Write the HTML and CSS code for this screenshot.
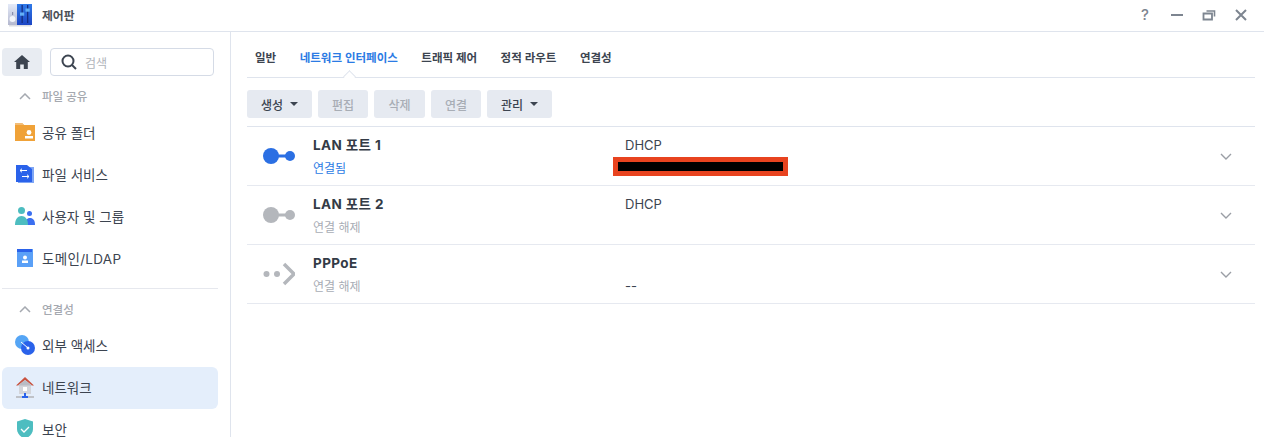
FILE: index.html
```html
<!DOCTYPE html>
<html lang="ko">
<head>
<meta charset="utf-8">
<title>제어판</title>
<link rel="stylesheet" href="styles.css">
</head>
<body>
<div class="app">
  <header class="titlebar">
    <svg class="app-icon" width="24" height="24" viewBox="0 0 24 24">
      <defs>
        <linearGradient id="cpL" x1="0" y1="0" x2="0" y2="1"><stop offset="0" stop-color="#e4eaf8"/><stop offset="1" stop-color="#b4b8cf"/></linearGradient>
        <linearGradient id="cpR" x1="0" y1="0" x2="0" y2="1"><stop offset="0" stop-color="#2f7ae8"/><stop offset="1" stop-color="#1c45c4"/></linearGradient>
      </defs>
      <rect x="0" y="1" width="9" height="21" fill="url(#cpL)"/>
      <rect x="9" y="1" width="15" height="21" fill="url(#cpR)"/>
      <circle cx="4.500" cy="16" r="3" fill="#f2f4fa"/>
      <rect x="4" y="9" width="1.200" height="3" fill="#8b90ad"/>
      <rect x="13.500" y="2" width="1.300" height="18" fill="#142c80"/>
      <rect x="19" y="2" width="1.300" height="18" fill="#142c80"/>
      <rect x="12" y="9.500" width="4.200" height="3.200" fill="#63b0f5"/>
      <rect x="17.500" y="5.500" width="4.200" height="3.200" fill="#63b0f5"/>
      <rect x="1" y="22" width="22" height="1.500" fill="#dcdde2"/>
    </svg>
    <span class="app-title">제어판</span>
    <div class="win-controls">
      <span class="help">?</span>
      <svg width="14" height="14" viewBox="0 0 14 14"><path d="M1 7h12" stroke="#7d8590" stroke-width="2"/></svg>
      <svg width="14" height="14" viewBox="0 0 14 14" fill="none" stroke="#7d8590"><path d="M1.500 5.500h8.500v6h-8.500z" stroke-width="1.800"/><path d="M4.500 3h8v5.500" stroke-width="1.600"/></svg>
      <svg width="14" height="14" viewBox="0 0 14 14"><path d="M2 2l10 10M12 2L2 12" stroke="#7d8590" stroke-width="2"/></svg>
    </div>
  </header>
  <div class="body">
    <aside class="sidebar">
      <div class="search-row">
        <button class="home-btn">
          <svg width="16" height="14" viewBox="0 0 16 14"><path d="M8 0L0 7h2.200v7h4v-4.500h3.600V14h4V7H16z" fill="#3c4450"/></svg>
        </button>
        <div class="search">
          <svg width="16" height="16" viewBox="0 0 16 16" fill="none" stroke="#3c4450" stroke-width="2"><circle cx="7" cy="7" r="5.500"/><path d="M11 11l4 4"/></svg>
          <span>검색</span>
        </div>
      </div>
      <div class="group-head first">
        <svg width="12" height="7" viewBox="0 0 12 7" fill="none" stroke="#a5a9b0" stroke-width="1.500"><path d="M1 6l5-5 5 5"/></svg>
        <span>파일 공유</span>
      </div>
      <div class="nav-item">
        <svg width="20" height="18" viewBox="0 0 20 18"><path d="M0 0h7l2 2h11v16H0z" fill="#f0a238"/><path d="M0 0h7l2 2H0z" fill="#f2bd78"/><circle cx="14" cy="9.500" r="2.400" fill="#fff"/><rect x="10" y="13" width="8" height="2.500" fill="#fff"/></svg>
        <span>공유 폴더</span>
      </div>
      <div class="nav-item">
        <svg width="20" height="20" viewBox="0 0 20 20"><rect x="3" y="3" width="16" height="16" fill="#7fa6f5"/><path d="M1 1h11l5 4v13H1z" fill="#2a62ea"/><path d="M5 6.500H12M5 6.500l2-1.800M5 6.500l2 1.800M14 12.500H7M14 12.500l-2-1.800M14 12.500l-2 1.800" stroke="#fff" fill="none" stroke-width="1"/></svg>
        <span>파일 서비스</span>
      </div>
      <div class="nav-item">
        <svg width="20" height="18" viewBox="0 0 20 18"><circle cx="14.500" cy="6.500" r="2.500" fill="#3b6ff0"/><path d="M10 18c0-5 2-7 5-7s5 2 5 7z" fill="#3b6ff0"/><circle cx="6.500" cy="3.500" r="3.500" fill="#4dbdc0"/><path d="M0 18c0-6 3-9 6.500-9s6.500 3 6.500 9z" fill="#4dbdc0"/></svg>
        <span>사용자 및 그룹</span>
      </div>
      <div class="nav-item spaced">
        <svg width="20" height="20" viewBox="0 0 20 20"><rect x="2" y="1" width="16" height="18" fill="#5aa0f7"/><rect x="2" y="1" width="15" height="3" fill="#2a62ea"/><circle cx="10" cy="9.500" r="2" fill="#fff"/><rect x="7" y="12.500" width="6" height="2.500" fill="#fff"/></svg>
        <span>도메인/LDAP</span>
      </div>
      <hr class="divider">
      <div class="group-head">
        <svg width="12" height="7" viewBox="0 0 12 7" fill="none" stroke="#a5a9b0" stroke-width="1.500"><path d="M1 6l5-5 5 5"/></svg>
        <span>연결성</span>
      </div>
      <div class="nav-item">
        <svg width="20" height="20" viewBox="0 0 20 20"><circle cx="7" cy="7" r="7" fill="#55a5f5"/><circle cx="13" cy="13" r="7" fill="#2a62ea"/><path d="M6 7l7 6" stroke="#fff" stroke-width="1"/><circle cx="13" cy="13" r="1.500" fill="#fff"/></svg>
        <span>외부 액세스</span>
      </div>
      <div class="nav-item active">
        <svg width="20" height="21" viewBox="0 0 20 21"><path d="M4 8h12v9H4z" fill="#d3d5da"/><path d="M10 0L1 8.500h2L10 3l7 5.500h2z" fill="#c9523f"/><path d="M3 8.500L10 3l7 5.500z" fill="#b9bcc4"/><rect x="8" y="10" width="4" height="4" fill="#fff"/><rect x="1" y="19" width="18" height="2" fill="#bfc2c8"/><rect x="9" y="16" width="2" height="3" fill="#2a62ea"/><rect x="7" y="19" width="6" height="2" fill="#2a62ea"/></svg>
        <span>네트워크</span>
      </div>
      <div class="nav-item">
        <svg width="20" height="20" viewBox="0 0 20 20"><path d="M10 0l8 2.500V10c0 5-4 8-8 10-4-2-8-5-8-10V2.500z" fill="#4dbdc0"/><path d="M6 10l3 3 5-5" stroke="#fff" stroke-width="1.300" fill="none"/></svg>
        <span>보안</span>
      </div>
    </aside>
    <main class="main">
      <nav class="tabs">
        <span class="tab">일반</span>
        <span class="tab on">네트워크 인터페이스</span>
        <span class="tab">트래픽 제어</span>
        <span class="tab">정적 라우트</span>
        <span class="tab">연결성</span>
      </nav>
      <div class="toolbar">
        <button class="btn wide">생성<i class="caret"></i></button>
        <button class="btn off">편집</button>
        <button class="btn off mid">삭제</button>
        <button class="btn off">연결</button>
        <button class="btn wide">관리<i class="caret"></i></button>
      </div>
      <div class="list">
        <div class="row">
          <svg class="row-icon" width="32" height="16" viewBox="0 0 32 16"><circle cx="8" cy="8" r="8" fill="#2b6fe3"/><rect x="12" y="6.500" width="14" height="3" fill="#2b6fe3"/><circle cx="27" cy="8" r="5" fill="#2b6fe3"/></svg>
          <div class="col-name"><b>LAN 포트 1</b><span class="ok">연결됨</span></div>
          <div class="col-ip"><span>DHCP</span><span class="redact"><i></i></span></div>
          <svg class="chev" width="12" height="7" viewBox="0 0 12 7" fill="none" stroke="#9a9ea5" stroke-width="1.400"><path d="M1 1l5 5 5-5"/></svg>
        </div>
        <div class="row">
          <svg class="row-icon" width="32" height="16" viewBox="0 0 32 16"><circle cx="8" cy="8" r="8" fill="#b4b7bc"/><rect x="12" y="6.500" width="14" height="3" fill="#b4b7bc"/><circle cx="27" cy="8" r="5" fill="#b4b7bc"/></svg>
          <div class="col-name"><b>LAN 포트 2</b><span class="mute">연결 해제</span></div>
          <div class="col-ip"><span>DHCP</span></div>
          <svg class="chev" width="12" height="7" viewBox="0 0 12 7" fill="none" stroke="#9a9ea5" stroke-width="1.400"><path d="M1 1l5 5 5-5"/></svg>
        </div>
        <div class="row">
          <svg class="row-icon" width="32" height="24" viewBox="0 0 32 24"><circle cx="3.500" cy="12" r="3" fill="#b4b7bc"/><circle cx="14" cy="12" r="3" fill="#b4b7bc"/><path d="M21 2l10 10-10 10" fill="none" stroke="#b4b7bc" stroke-width="3.500"/></svg>
          <div class="col-name"><b>PPPoE</b><span class="mute">연결 해제</span></div>
          <div class="col-ip dash"><span>--</span></div>
          <svg class="chev" width="12" height="7" viewBox="0 0 12 7" fill="none" stroke="#9a9ea5" stroke-width="1.400"><path d="M1 1l5 5 5-5"/></svg>
        </div>
      </div>
    </main>
  </div>
</div>
</body>
</html>
```
FILE: styles.css
```css
* { box-sizing: border-box; }
html, body { margin: 0; height: 437px; overflow: hidden; background: #fff; }
body { font-family: Inter, "Noto Sans CJK KR", sans-serif; font-size: 13px; color: #3c4450; }
.app { display: flex; flex-direction: column; height: 437px; }
.titlebar { flex: 0 0 32px; display: flex; align-items: center; padding: 0 16px 2px 8px; border-bottom: 1px solid #dfe4ed; }
.app-title { margin-left: 10px; font-size: 11.800px; font-weight: 700; color: #4a5059; }
.win-controls { margin-left: auto; display: flex; align-items: center; gap: 18px; }
.help { font-size: 15px; font-weight: 500; color: #7d8590; width: 14px; text-align: center; }
.body { flex: 1; display: flex; min-height: 0; }
.sidebar { flex: 0 0 231px; border-right: 1px solid #dfe4ed; padding: 16px 12px 0 2px; overflow: hidden; }
.search-row { display: flex; gap: 8px; }
.home-btn { width: 40px; height: 28px; border: 0; border-radius: 4px; background: #e8ecf2; display: flex; align-items: center; justify-content: center; padding: 0; }
.search { width: 164px; height: 28px; border: 1px solid #d5dbe6; border-radius: 4px; display: flex; align-items: center; gap: 8px; padding-left: 10px; font-size: 12px; color: #b0b4ba; }
.group-head { display: flex; align-items: center; height: 24px; gap: 11px; padding-left: 17px; font-size: 11.500px; font-weight: 500; color: #a5a9b0; margin-bottom: 3px; }
.group-head.first { margin-top: 8px; }
.nav-item { display: flex; align-items: center; height: 42px; width: 216px; padding-left: 13px; gap: 7px; border-radius: 6px; font-size: 13.500px; color: #3c4450; }
.nav-item svg { flex: 0 0 20px; }
.nav-item.spaced { letter-spacing: 0.300px; }
.nav-item.active { background: #e4eefb; margin-top: 1px; margin-bottom: -1px; padding-bottom: 2px; }
.divider { border: 0; border-top: 1px solid #e6e8ee; margin: 9px 0 8px; width: 216px; }
.main { flex: 1; padding: 0 9px 0 16px; min-width: 0; }
.tabs { height: 46px; padding-top: 18px; display: flex; gap: 23.500px; padding-left: 8px; border-bottom: 1px solid #dfe4ed; font-size: 11.500px; font-weight: 600; color: #3c4450; }
.tab { position: relative; line-height: 17px; }
.tab.on { color: #2b7be4; }
.tab.on::after { content: ""; position: absolute; left: 50%; bottom: -4px; width: 8px; height: 8px; margin-left: -4px; background: #fff; border-left: 1px solid #dfe4ed; border-top: 1px solid #dfe4ed; transform: rotate(45deg); }
.toolbar { display: flex; gap: 6px; padding-top: 12px; height: 49px; border-bottom: 1px solid #dfe4ed; }
.btn { height: 28px; width: 50px; padding: 0; border: 0; border-radius: 3px; background: #e6eaf1; font: 500 12px Inter, "Noto Sans CJK KR", sans-serif; color: #3c4450; display: flex; align-items: center; justify-content: center; }
.btn.wide { width: 65px; }
.btn.mid { width: 51px; }
.btn.off { color: #a8adb5; }
.caret { display: inline-block; margin-left: 7px; border-left: 4px solid transparent; border-right: 4px solid transparent; border-top: 4px solid #3c4450; }
.row { height: 59px; border-bottom: 1px solid #e6e9f0; display: flex; align-items: center; padding-left: 16px; }
.row-icon { flex: 0 0 32px; }
.col-name { width: 312px; margin-left: 18px; display: flex; flex-direction: column; gap: 6px; align-self: flex-start; padding-top: 9px; }
.col-name b { font-size: 13.500px; line-height: 18px; font-weight: 700; color: #333b46; letter-spacing: 0.400px; }
.col-name span { font-size: 12px; line-height: 17px; }
.ok { color: #2b7be4; }
.mute { color: #a8adb5; }
.col-ip { align-self: flex-start; padding-top: 10px; font-size: 13px; line-height: 16px; display: flex; flex-direction: column; color: #3c4450; }
.col-ip.dash { padding-top: 33px; }
.redact { width: 175px; height: 19px; margin-left: -12px; margin-top: 4px; background: #e8431f; display: flex; align-items: center; justify-content: center; }
.redact i { width: 165px; height: 9px; background: #000; display: block; }
.chev { margin-left: auto; margin-right: 23px; }
```
